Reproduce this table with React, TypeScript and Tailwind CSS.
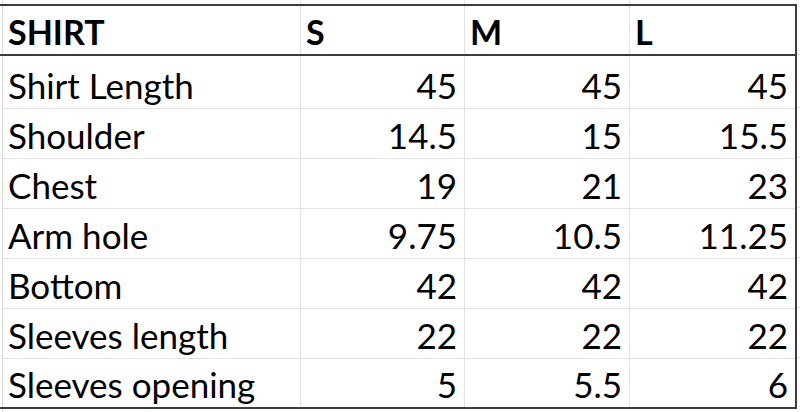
const cols = ['w-[298px]', 'w-[164px]', 'w-[165px]', 'w-[165px]']

const rows: [string, string, string, string][] = [
  ['Shirt Length', '45', '45', '45'],
  ['Shoulder', '14.5', '15', '15.5'],
  ['Chest', '19', '21', '23'],
  ['Arm hole', '9.75', '10.5', '11.25'],
  ['Bottom', '42', '42', '42'],
  ['Sleeves length', '22', '22', '22'],
  ['Sleeves opening', '5', '5.5', '6'],
]

const heights = ['h-[53px]', 'h-[50px]', 'h-[50px]', 'h-[50px]', 'h-[50px]', 'h-[50px]', 'h-[48px]']

export default function App() {
  return (
    <div
      className="w-[800px] h-[412px] bg-white overflow-hidden flex text-black"
      style={{ fontFamily: 'Lato, "Open Sans", sans-serif' }}
    >
      <div className="w-[3px] shrink-0 border-r border-[#dadada]" />
      <div className="flex flex-col shrink-0">
        {/* sliver of the row above */}
        <div className="flex h-[4px]">
          {cols.map((w, i) => (
            <div key={i} className={`${w} ${i < 3 ? 'border-r border-[#e2e2e2]' : ''}`} />
          ))}
        </div>
        <div className="w-[792px] border-t-2 border-b-2 border-r-2 border-[#3c3c3c] -ml-[3px] pl-[3px] box-content">
          <div className="flex h-[48px] border-b-2 border-[#3c3c3c] -ml-[3px] pl-[3px] box-content">
            {['SHIRT', 'S', 'M', 'L'].map((t, i) => (
              <div
                key={t}
                className={`${cols[i]} ${i < 3 ? 'border-r border-[#e2e2e2]' : 'w-[162px]'} flex items-end pb-[5px] px-[5px] text-[34px] font-bold leading-none`}
              >
                {t}
              </div>
            ))}
          </div>
          {rows.map((r, ri) => (
            <div
              key={r[0]}
              className={`flex ${heights[ri]} ${ri < rows.length - 1 ? 'border-b border-[#e2e2e2]' : ''}`}
            >
              {r.map((c, i) => (
                <div
                  key={i}
                  className={`${cols[i]} ${i < 3 ? 'border-r border-[#e2e2e2]' : 'w-[162px]'} flex items-end pb-[5px] text-[35px] leading-none ${
                    i === 0 ? 'pl-[5px]' : 'justify-end pr-[7px]'
                  }`}
                >
                  {c}
                </div>
              ))}
            </div>
          ))}
        </div>
      </div>
      <div className="flex-1 flex flex-col">
        <div className="h-[55px] border-b border-[#e2e2e2]" />
        {heights.slice(0, 6).map((h, i) => (
          <div key={i} className={`${h} border-b border-[#e2e2e2]`} />
        ))}
      </div>
    </div>
  )
}
